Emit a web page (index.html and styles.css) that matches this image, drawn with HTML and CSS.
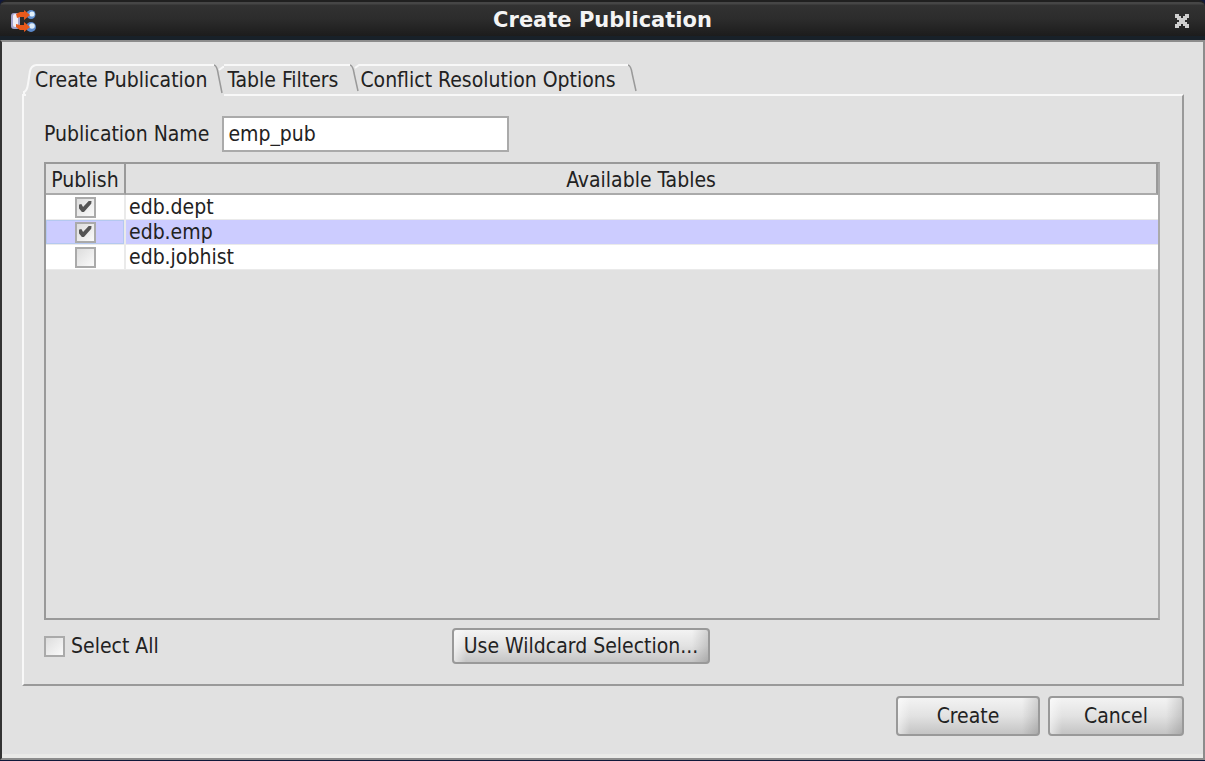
FILE: index.html
```html
<!DOCTYPE html>
<html lang="en">
<head>
<meta charset="utf-8">
<title>Create Publication</title>
<link rel="stylesheet" href="styles.css">
</head>
<body>
<div class="window">
  <header class="titlebar">
    <svg class="app-icon" width="26" height="28" viewBox="0 0 26 28" aria-hidden="true">
      <circle cx="21" cy="9.5" r="4.5" fill="#5f8fd0"/>
      <circle cx="22" cy="9" r="2.6" fill="#e2f0fa"/>
      <circle cx="21" cy="22" r="5" fill="#5a88ca"/>
      <circle cx="22" cy="21" r="2.8" fill="#dcebf8"/>
      <rect x="1" y="8" width="9" height="16" rx="3" fill="#a3a1cc"/>
      <rect x="3" y="9" width="5" height="13" rx="2" fill="#f1ecf5"/>
      <path d="M6 9l4-2h4V5l6 5-6 5v-3h-4l-3 1zM6 19l4 1h4v-3l6 5-6 5v-2h-4l-4-3z" fill="#e85a1c"/>
    </svg>
    <h1 class="title">Create Publication</h1>
    <button class="close" type="button" aria-label="Close">
      <svg width="14" height="14" viewBox="0 0 14 14" aria-hidden="true"><path d="M0 0h4v2h2v2h2V2h2V0h4v4h-2v2h-2v2h2v2h2v4h-4v-2H8v-2H6v2H4v2H0v-4h2V8h2V6H2V4H0z" fill="#cfcfcf"/></svg>
    </button>
  </header>
  <main class="content">
    <div class="tabs" role="tablist">
      <button class="tab tab-active" type="button" role="tab" aria-selected="true">
        <svg class="edge-left" width="14" height="32" viewBox="0 0 14 32" aria-hidden="true"><path d="M0 31h2v-3q3-1 4-8l2-13q1-5 6-6" fill="none" stroke="#f8f8f8" stroke-width="2"/></svg>
        <span class="tab-label">Create Publication</span>
        <svg class="edge-right" width="10" height="32" viewBox="0 0 10 32" aria-hidden="true"><path d="M5 6l4-3h1" fill="none" stroke="#f8f8f8" stroke-width="2"/><path d="M0 1q3 1 4 8l4 20" fill="none" stroke="#999" stroke-width="1.5"/></svg>
      </button>
      <button class="tab" type="button" role="tab" aria-selected="false">
        <span class="tab-label">Table Filters</span>
        <svg class="edge-right" width="10" height="30" viewBox="0 0 10 30" aria-hidden="true"><path d="M5 4l4-3h1" fill="none" stroke="#f8f8f8" stroke-width="2"/><path d="M0 1q3 1 4 8l4 18" fill="none" stroke="#999" stroke-width="1.5"/></svg>
      </button>
      <button class="tab tab-last" type="button" role="tab" aria-selected="false">
        <span class="tab-label">Conflict Resolution Options</span>
        <svg class="edge-right" width="10" height="30" viewBox="0 0 10 30" aria-hidden="true"><path d="M0 1q3 1 4 8l4 18" fill="none" stroke="#999" stroke-width="1.5"/></svg>
      </button>
    </div>
    <section class="panel" role="tabpanel">
      <div class="field">
        <label for="pub-name">Publication Name</label>
        <input id="pub-name" class="text-input" type="text" value="emp_pub">
      </div>
      <div class="table-frame">
        <table class="tables">
          <thead>
            <tr><th class="col-publish" scope="col">Publish</th><th scope="col">Available Tables</th></tr>
          </thead>
          <tbody>
            <tr><td class="cell-check"><input id="t-dept" class="check" type="checkbox" checked></td><td><label for="t-dept">edb.dept</label></td></tr>
            <tr class="selected"><td class="cell-check"><input id="t-emp" class="check" type="checkbox" checked></td><td><label for="t-emp">edb.emp</label></td></tr>
            <tr><td class="cell-check"><input id="t-jobhist" class="check" type="checkbox"></td><td><label for="t-jobhist">edb.jobhist</label></td></tr>
          </tbody>
        </table>
      </div>
      <div class="panel-actions">
        <div class="select-all"><input id="select-all" class="check" type="checkbox"><label for="select-all">Select All</label></div>
        <button class="button wildcard" type="button">Use Wildcard Selection...</button>
      </div>
    </section>
    <footer class="actions">
      <button class="button create" type="button">Create</button>
      <button class="button cancel" type="button">Cancel</button>
    </footer>
  </main>
</div>
</body>
</html>
```
FILE: styles.css
```css
* {
  box-sizing: border-box;
}

body {
  margin: 0;
  background: #10183a;
  color: #222;
  font: 21px/24px "DejaVu Sans Condensed", "DejaVu Sans", sans-serif;
}

button,
input {
  margin: 0;
  color: inherit;
  font: inherit;
}

.window {
  display: flex;
  flex-direction: column;
  min-height: 100vh;
  border-bottom: 1px solid #10183a;
}

.titlebar {
  display: grid;
  grid-template-columns: 40px 1fr 40px;
  align-items: center;
  height: 40px;
  border-top: 2px solid #202020;
  border-bottom: 4px solid #182129;
  border-radius: 6px 6px 0 0;
  background: linear-gradient(#464646 0, #464646 2px, #323232 3px, #2c2c2c 50%, #1c1c1c 100%);
  color: #f4f4f4;
}

.app-icon {
  margin-left: 10px;
}

.title {
  margin: 0;
  padding-top: 2px;
  font: bold 21px/24px "DejaVu Sans", sans-serif;
  text-align: center;
}

.close {
  display: flex;
  padding: 12px 10px 8px;
  border: 0;
  background: none;
}

.content {
  display: flex;
  flex: 1;
  flex-direction: column;
  padding: 22px 19px 22px 20px;
  border: 2px solid #8c8c8c;
  border-left-color: #333;
  background: #e1e1e1;
  box-shadow: inset 0 -4px #e9e9e7;
}

.tabs {
  display: flex;
  align-items: flex-end;
  padding-left: 4px;
}

.tab {
  position: relative;
  display: flex;
  height: 30px;
  padding: 0 10px 0 3px;
  border: 0;
  background: none;
}

.tab::before {
  position: absolute;
  top: 0;
  right: 10px;
  left: 0;
  height: 2px;
  background: #f8f8f8;
  content: "";
}

.tab-label {
  padding: 4px 12px 0 0;
  white-space: nowrap;
}

.tab-last {
  padding-left: 0;
}

.tab-active {
  z-index: 1;
  height: 32px;
  margin-bottom: -2px;
  padding-left: 9px;
  background: #e1e1e1;
}

.tab-active::before {
  left: 10px;
}

.tab-active .tab-label {
  padding-right: 7px;
}

.edge-left {
  position: absolute;
  top: 0;
  left: -4px;
}

.edge-right {
  position: absolute;
  top: 0;
  right: 0;
}

.panel {
  display: flex;
  flex: 1;
  flex-direction: column;
  padding: 20px 22px 20px 20px;
  border: 2px solid #999;
  border-top-color: #f8f8f8;
  border-left-color: #f8f8f8;
}

.field {
  display: flex;
  gap: 13px;
  align-items: center;
}

.text-input {
  width: 287px;
  height: 36px;
  padding: 0 4px;
  border: 2px solid #aaa;
  border-radius: 0;
  background: #fff;
}

.table-frame {
  flex: 1;
  margin-top: 10px;
  border: 2px solid #999;
  border-right-color: #aaa;
}

.tables {
  width: 100%;
  border-collapse: separate;
  border-spacing: 0;
  table-layout: fixed;
}

.tables th {
  height: 31px;
  padding: 2px 0 0;
  border-right: 2px solid #999;
  border-bottom: 2px solid #aaa;
  font-weight: normal;
}

.tables .col-publish {
  width: 80px;
}

.tables td {
  height: 25px;
  padding: 0 3px;
  border-bottom: 1px solid #eaeaea;
  background: #fff;
  line-height: 24px;
}

.tables .cell-check {
  padding: 0;
  border-right: 2px solid #eaeaea;
  line-height: 0;
  text-align: center;
}

.tables .selected td {
  background: #ccf;
}

.tables .selected .cell-check {
  box-shadow: inset 0 0 0 1px #b4c8f0;
}

.check {
  width: 21px;
  height: 21px;
  border: 2px solid #aaa;
  border-radius: 0;
  background: linear-gradient(135deg, #ddd, #fafafa);
  appearance: none;
  vertical-align: middle;
}

.check:checked::after {
  display: block;
  width: 13px;
  height: 12px;
  margin: 2px;
  background: #555;
  clip-path: polygon(0 35%, 22% 30%, 35% 55%, 82% 0, 100% 5%, 98% 28%, 42% 95%, 26% 95%, 0 60%);
  content: "";
}

.panel-actions {
  display: grid;
  grid-template-columns: 408px auto 1fr;
  align-items: center;
  margin-top: 8px;
}

.select-all {
  display: flex;
  gap: 6px;
  align-items: center;
}

.button {
  padding: 0 8px;
  border: 2px solid #999;
  border-radius: 4px;
  background: linear-gradient(90deg, #fff8 0, #fff0 12px, #fff0 calc(100% - 16px), #0002 100%), linear-gradient(#f3f3f3, #e2e2e2 50%, #c4c4c4);
}

.wildcard {
  min-width: 258px;
  height: 36px;
}

.actions {
  display: flex;
  gap: 8px;
  justify-content: flex-end;
  margin-top: 10px;
}

.actions .button {
  height: 40px;
}

.create {
  width: 144px;
}

.cancel {
  width: 136px;
}
```
